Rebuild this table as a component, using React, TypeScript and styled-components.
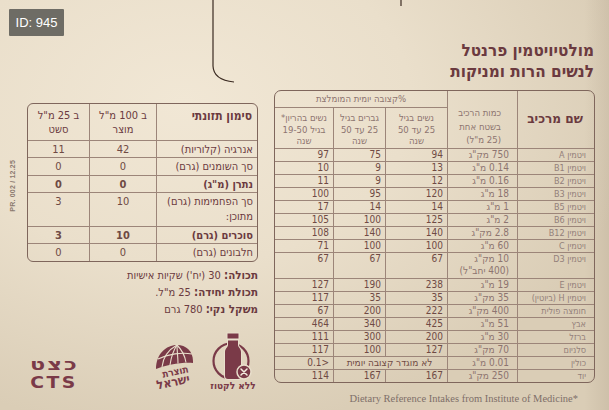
import React from "react";
import styled, { createGlobalStyle } from "styled-components";

const ink = "#6b3a40";
const inkNum = "#6f4a44";
const inkSoft = "#8d7470";
const ruleC = "#9c8579";
const ruleDark = "#7f665c";
const logoC = "#7a3a48";
const paper = "#e9dfcc";
const HEB = `"DejaVu Sans Condensed", "DejaVu Sans", "Liberation Sans", sans-serif`;

const Global = createGlobalStyle`
  html, body { margin: 0; padding: 0; background: ${paper}; }
  body { font-family: ${HEB}; }
`;

const Page = styled.div`
  position: relative;
  width: 609px;
  height: 410px;
  overflow: hidden;
  display: flex;
  align-items: flex-start;
  color: ${ink};
  background:
    linear-gradient(90deg, rgba(0,0,0,0) 96%, rgba(120,100,80,0.12) 100%),
    radial-gradient(ellipse 75% 80% at 30% 25%, #f1e7d5 0%, #eadfcb 50%, #dacdb6 100%);
`;

const DieCut = styled.svg`
  position: absolute;
  left: 0;
  top: 0;
  pointer-events: none;
`;

const Badge = styled.div`
  position: absolute;
  left: 9px;
  top: 9px;
  width: 55px;
  height: 27px;
  background: #6e6c65;
  color: #ffffff;
  font-family: "Liberation Sans", Arial, sans-serif;
  font-size: 13px;
  display: flex;
  align-items: center;
  justify-content: center;
  border-radius: 1px;
`;

const SideStrip = styled.div`
  width: 27px;
  flex: none;
  padding-top: 160px;
  display: flex;
  justify-content: center;
  padding-right: 3px;
  box-sizing: border-box;
`;

const SideCode = styled.div`
  writing-mode: vertical-rl;
  transform: rotate(180deg);
  font-family: "Liberation Sans", Arial, sans-serif;
  font-weight: 700;
  font-size: 7px;
  letter-spacing: 0.2px;
  color: #8b7a70;
`;

const LeftColumn = styled.div`
  width: 231px;
  flex: none;
  padding-top: 103px;
  display: flex;
  flex-direction: column;
`;

const RightColumn = styled.div`
  width: 321px;
  flex: none;
  margin-left: 16px;
  padding-top: 40px;
  display: flex;
  flex-direction: column;
`;

const TableFrame = styled.div<{ $thick?: boolean; $radius: number }>`
  border: ${(p) => (p.$thick ? "1.5px" : "1px")} solid ${ruleDark};
  border-radius: ${(p) => p.$radius}px;
  overflow: hidden;
`;

const Table = styled.table`
  direction: rtl;
  width: calc(100% + 2px);
  margin: -1px;
  border-collapse: collapse;
  table-layout: fixed;
`;

/* ---------- nutrition (left) table ---------- */

const NHead = styled.th<{ $bold?: boolean; $align?: string }>`
  border: 1px solid ${ruleC};
  vertical-align: top;
  padding: 5px 6px 0;
  font-size: ${(p) => (p.$bold ? "12px" : "11px")};
  font-weight: ${(p) => (p.$bold ? 700 : 400)};
  line-height: 14px;
  text-align: ${(p) => p.$align || "center"};
  color: ${ink};
`;

const NRow = styled.tr<{ $h: number }>`
  height: ${(p) => p.$h}px;
`;

const NCell = styled.td<{ $bold?: boolean; $num?: boolean }>`
  border: 1px solid ${ruleC};
  vertical-align: top;
  padding: 1px 5px 0;
  font-size: 11px;
  line-height: 15px;
  font-weight: ${(p) => (p.$bold ? 700 : 400)};
  text-align: ${(p) => (p.$num ? "center" : "right")};
  color: ${(p) => (p.$num ? inkNum : ink)};
  white-space: nowrap;
`;

const InfoList = styled.div`
  direction: rtl;
  padding-top: 5px;
  display: flex;
  flex-direction: column;
`;

const InfoLine = styled.div`
  font-size: 11px;
  line-height: 17px;
  color: ${ink};
  text-align: right;
`;

const InfoLabel = styled.span`
  font-weight: 700;
  font-size: 11.5px;
`;

const LogoRow = styled.div`
  margin-top: 11px;
  height: 63px;
  display: flex;
  align-items: flex-end;
`;

const CtsLogo = styled.div`
  width: 56px;
  margin-bottom: 0;
  display: flex;
  flex-direction: column;
  align-items: center;
  color: ${logoC};
  font-family: "DejaVu Sans", sans-serif;
  font-weight: 700;
`;

const CtsHeb = styled.div`
  direction: rtl;
  font-size: 16px;
  line-height: normal;
  letter-spacing: 1.5px;
  transform: scaleX(1.4);
`;

const CtsLat = styled.div`
  font-size: 15px;
  line-height: normal;
  letter-spacing: 2px;
  transform: scaleX(1.25);
`;

const DomeBox = styled.svg`
  margin-left: 64px;
  flex: none;
  overflow: visible;
`;

const LactoseBox = styled.div`
  margin-left: 12px;
  width: 50px;
  display: flex;
  flex-direction: column;
  align-items: center;
`;

const LactoseText = styled.div`
  direction: rtl;
  font-size: 10px;
  font-weight: 700;
  line-height: 12px;
  color: ${logoC};
  white-space: nowrap;
`;

/* ---------- vitamin (right) table ---------- */

const Title = styled.h1`
  direction: rtl;
  margin: 0 0 8px;
  font-size: 17px;
  line-height: 21px;
  font-weight: 700;
  color: ${ink};
  text-align: right;
  padding-right: 1px;
`;

const VHead = styled.th<{ $pt?: number; $pr?: number; $align?: string; $bold?: boolean; $soft?: boolean; $valign?: string }>`
  border: 1px solid ${ruleC};
  vertical-align: ${(p) => p.$valign || "middle"};
  padding: ${(p) => p.$pt ?? 0}px ${(p) => p.$pr ?? 2}px 0 2px;
  font-size: ${(p) => (p.$bold ? "13.5px" : "9.5px")};
  font-weight: ${(p) => (p.$bold ? 700 : 400)};
  line-height: ${(p) => (p.$bold ? "16px" : "11.5px")};
  text-align: ${(p) => p.$align || "center"};
  color: ${(p) => (p.$soft ? inkSoft : ink)};
`;

const HeadLines = styled.span`
  display: block;
  line-height: 13.5px;
`;

const VRow = styled.tr<{ $h?: number }>`
  height: ${(p) => p.$h ?? 13}px;
`;

const VCell = styled.td<{ $kind: "name" | "amt" | "num" | "span" }>`
  border: 1px solid ${ruleC};
  vertical-align: top;
  padding: 0 ${(p) => (p.$kind === "name" ? 9 : p.$kind === "amt" ? 8 : 4)}px 0 2px;
  font-size: ${(p) => (p.$kind === "name" ? "9px" : "10px")};
  line-height: 12px;
  text-align: ${(p) => (p.$kind === "span" ? "center" : "right")};
  color: ${(p) => (p.$kind === "name" ? "#93807a" : p.$kind === "amt" ? inkSoft : inkNum)};
  white-space: nowrap;
`;

const Footnote = styled.div`
  margin-top: 9px;
  padding-right: 17px;
  text-align: right;
  font-family: "Liberation Serif", "Times New Roman", serif;
  font-size: 10.5px;
  line-height: 13px;
  color: #7e6f69;
`;

const nutrition: { name: React.ReactNode; a: string; b: string; bold?: boolean; h: number }[] = [
  { name: "אנרגיה (קלוריות)", a: "42", b: "11", h: 17 },
  { name: "סך השומנים (גרם)", a: "0", b: "0", h: 18 },
  { name: 'נתרן (מ"ג)', a: "0", b: "0", bold: true, h: 17 },
  {
    name: (
      <>
        סך הפחמימות (גרם)
        <br />
        מתוכן:
      </>
    ),
    a: "10",
    b: "3",
    h: 34,
  },
  { name: "סוכרים (גרם)", a: "10", b: "3", bold: true, h: 17 },
  { name: "חלבונים (גרם)", a: "0", b: "0", h: 18 },
];

type VRowData = [string, string, string, string, string];
const vitA: VRowData[] = [
  ["ויטמין A", '750 מק"ג', "94", "75", "97"],
  ["ויטמין B1", '0.14 מ"ג', "13", "9", "10"],
  ["ויטמין B2", '0.16 מ"ג', "12", "9", "11"],
  ["ויטמין B3", '18 מ"ג', "120", "95", "100"],
  ["ויטמין B5", '1 מ"ג', "14", "14", "17"],
  ["ויטמין B6", '2 מ"ג', "125", "100", "105"],
  ["ויטמין B12", '2.8 מק"ג', "140", "140", "108"],
  ["ויטמין C", '60 מ"ג', "100", "100", "71"],
];
const vitB: VRowData[] = [
  ["ויטמין E", '19 מ"ג', "238", "190", "127"],
  ["ויטמין H (ביוטין)", '35 מק"ג', "35", "35", "117"],
  ["חומצה פולית", '400 מק"ג', "222", "200", "67"],
  ["אבץ", '51 מ"ג', "425", "340", "464"],
  ["ברזל", '30 מ"ג', "200", "300", "111"],
  ["סלניום", '70 מק"ג', "127", "100", "117"],
];

const VitRow = ({ r }: { r: VRowData }) => (
  <VRow>
    <VCell $kind="name">{r[0]}</VCell>
    <VCell $kind="amt">{r[1]}</VCell>
    <VCell $kind="num">{r[2]}</VCell>
    <VCell $kind="num">{r[3]}</VCell>
    <VCell $kind="num">{r[4]}</VCell>
  </VRow>
);

const Dome = () => (
  <DomeBox width="50" height="50" viewBox="0 0 50 50">
    <path d="M10 27 C 10 12, 20 3, 31 3 C 40 3, 47 9, 47 19 L 47 21 C 36 20, 20 23, 10 27 Z" fill={logoC} />
    <g stroke={paper} strokeWidth="1.1" fill="none">
      <path d="M31 3 C 22 8, 17 16, 16 25" />
      <path d="M31 3 C 27 9, 25 16, 24 23" />
      <path d="M31 3 C 31 9, 32 15, 32 21.5" />
      <path d="M31 3 C 36 8, 39 14, 40 20.5" />
      <path d="M12 17 C 22 12, 36 10, 46 12" />
    </g>
    <text
      x="30"
      y="33"
      textAnchor="middle"
      transform="rotate(-12 30 33)"
      fill={logoC}
      fontFamily={HEB}
      fontWeight="700"
      fontSize="10"
    >
      תוצרת
    </text>
    <text
      x="28"
      y="44"
      textAnchor="middle"
      transform="rotate(-12 28 44)"
      fill={logoC}
      fontFamily={HEB}
      fontWeight="700"
      fontSize="12.5"
    >
      ישראל
    </text>
  </DomeBox>
);

const LactoseIcon = () => (
  <svg width="50" height="48" viewBox="0 0 50 48">
    <circle cx="23" cy="29" r="17.5" fill="none" stroke={logoC} strokeWidth="2.2" />
    <path
      d="M19.5 1.5 H30.5 V6.5 H19.5 Z M20 8.5 H30 V13 C30 15, 33 16.5, 33 20 V44 C33 46, 32 47, 30 47 H20 C18 47, 17 46, 17 44 V20 C17 16.5, 20 15, 20 13 Z"
      fill={logoC}
      stroke={paper}
      strokeWidth="2"
      paintOrder="stroke"
    />
    <circle cx="36" cy="40" r="7" fill={logoC} stroke={paper} strokeWidth="1.5" />
    <path d="M33 37 L39 43 M39 37 L33 43" stroke="#f4ece0" strokeWidth="1.5" strokeLinecap="round" />
  </svg>
);

export default function App() {
  return (
    <>
      <Global />
      <Page>
        <DieCut width="609" height="410" viewBox="0 0 609 410">
          <path d="M213 0 L213 66 Q213.5 80 234 82" fill="none" stroke="#3b2b22" strokeWidth="1.2" />
          <path d="M401 0 L401 6" fill="none" stroke="#3b2b22" strokeWidth="1.2" />
        </DieCut>
        <Badge>ID: 945</Badge>

        <SideStrip>
          <SideCode>PR. 002 / 12.25</SideCode>
        </SideStrip>

        <LeftColumn>
          <TableFrame $radius={6}>
            <Table>
              <colgroup>
                <col style={{ width: 102 }} />
                <col style={{ width: 67 }} />
                <col style={{ width: 62 }} />
              </colgroup>
              <thead>
                <NRow $h={37}>
                  <NHead $bold $align="right">סימון תזונתי</NHead>
                  <NHead>
                    ב 100 מ"ל
                    <br />
                    מוצר
                  </NHead>
                  <NHead>
                    ב 25 מ"ל
                    <br />
                    סשט
                  </NHead>
                </NRow>
              </thead>
              <tbody>
                {nutrition.map((n, i) => (
                  <NRow key={i} $h={n.h}>
                    <NCell $bold={n.bold}>{n.name}</NCell>
                    <NCell $num $bold={n.bold}>{n.a}</NCell>
                    <NCell $num $bold={n.bold}>{n.b}</NCell>
                  </NRow>
                ))}
              </tbody>
            </Table>
          </TableFrame>

          <InfoList>
            <InfoLine>
              <InfoLabel>תכולה:</InfoLabel> 30 (יח') שקיות אישיות
            </InfoLine>
            <InfoLine>
              <InfoLabel>תכולת יחידה:</InfoLabel> 25 מ"ל.
            </InfoLine>
            <InfoLine>
              <InfoLabel>משקל נקי:</InfoLabel> 780 גרם
            </InfoLine>
          </InfoList>

          <LogoRow>
            <CtsLogo>
              <CtsHeb>כצט</CtsHeb>
              <CtsLat>CTS</CtsLat>
            </CtsLogo>
            <Dome />
            <LactoseBox>
              <LactoseIcon />
              <LactoseText>ללא לקטוז</LactoseText>
            </LactoseBox>
          </LogoRow>
        </LeftColumn>

        <RightColumn>
          <Title>
            מולטיויטמין פרנטל
            <br />
            לנשים הרות ומניקות
          </Title>

          <TableFrame $thick $radius={7}>
            <Table>
              <colgroup>
                <col style={{ width: 78 }} />
                <col style={{ width: 70 }} />
                <col style={{ width: 62 }} />
                <col style={{ width: 52 }} />
                <col style={{ width: 59 }} />
              </colgroup>
              <thead>
                <VRow $h={17}>
                  <VHead rowSpan={2} $bold $align="right" $pr={12} $valign="top" $pt={19}>
                    שם מרכיב
                  </VHead>
                  <VHead rowSpan={2} $soft $align="right" $pr={16} $valign="top" $pt={15}>
                    <HeadLines>
                      כמות הרכיב
                      <br />
                      בשטח אחת
                      <br />
                      (25 מ"ל)
                    </HeadLines>
                  </VHead>
                  <VHead colSpan={3} $soft>%קצובה יומית המומלצת</VHead>
                </VRow>
                <VRow $h={41}>
                  <VHead $soft $pt={3}>
                    נשים בגיל
                    <br />
                    25 עד 50
                    <br />
                    שנה
                  </VHead>
                  <VHead $soft $pt={3}>
                    גברים בגיל
                    <br />
                    25 עד 50
                    <br />
                    שנה
                  </VHead>
                  <VHead $soft $pt={3}>
                    נשים בהריון*
                    <br />
                    בגיל 19-50
                    <br />
                    שנה
                  </VHead>
                </VRow>
              </thead>
              <tbody>
                {vitA.map((r) => (
                  <VitRow key={r[0]} r={r} />
                ))}
                <VRow $h={26}>
                  <VCell $kind="name">ויטמין D3</VCell>
                  <VCell $kind="amt">
                    10 מק"ג
                    <br />
                    (400 יחב"ל)
                  </VCell>
                  <VCell $kind="num">67</VCell>
                  <VCell $kind="num">67</VCell>
                  <VCell $kind="num">67</VCell>
                </VRow>
                {vitB.map((r) => (
                  <VitRow key={r[0]} r={r} />
                ))}
                <VRow>
                  <VCell $kind="name">כולין</VCell>
                  <VCell $kind="amt">0.01 מ"ג</VCell>
                  <VCell $kind="span" colSpan={2}>
                    לא מוגדר קצובה יומית
                  </VCell>
                  <VCell $kind="num">&lt;0.1</VCell>
                </VRow>
                <VitRow r={["יוד", '250 מק"ג', "167", "167", "114"]} />
              </tbody>
            </Table>
          </TableFrame>

          <Footnote>Dietary Reference Intakes from Institute of Medicine*</Footnote>
        </RightColumn>
      </Page>
    </>
  );
}
